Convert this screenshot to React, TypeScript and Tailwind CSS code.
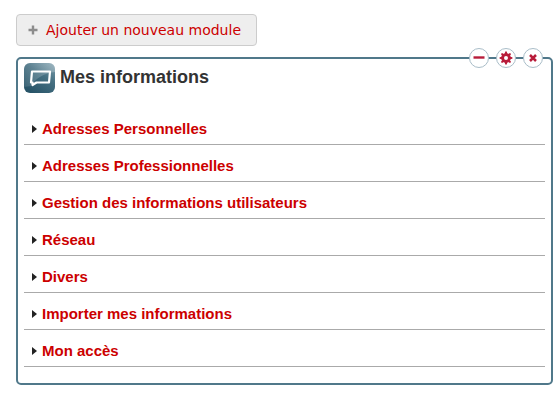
import React from 'react';

const sections = [
  'Adresses Personnelles',
  'Adresses Professionnelles',
  'Gestion des informations utilisateurs',
  'Réseau',
  'Divers',
  'Importer mes informations',
  'Mon accès',
];

const teeth = [0, 45, 90, 135, 180, 225, 270, 315];

const ModuleIcon = () => (
  <svg width="31" height="30" viewBox="0 0 31 30" aria-hidden="true">
    <defs>
      <linearGradient id="base" x1="1" y1="0" x2="0.3" y2="1">
        <stop offset="0" stopColor="#7fa0ae" />
        <stop offset="0.45" stopColor="#467082" />
        <stop offset="1" stopColor="#285468" />
      </linearGradient>
      <linearGradient id="shine" x1="0" y1="0" x2="1" y2="0">
        <stop offset="0" stopColor="#fff" stopOpacity="0.1" />
        <stop offset="1" stopColor="#fff" stopOpacity="0.25" />
      </linearGradient>
    </defs>
    <rect width="31" height="30" rx="6" fill="url(#base)" />
    <path d="M6 0h19a6 6 0 0 1 6 6v3C20 10 12 15 7 23L0 24V6a6 6 0 0 1 6-6z" fill="url(#shine)" />
    <path
      d="M8 8.5H26L25 19.500H12.500L8.500 22V19.500H7z"
      fill="none"
      stroke="#fff"
      strokeWidth="2.200"
      strokeLinejoin="round"
    />
  </svg>
);

const roundButton =
  'flex size-5 items-center justify-center rounded-full border border-[#a9bdc8] bg-white text-[#b81c3a]';

const Toolbar = () => (
  <div className="absolute -top-[11px] right-2 flex gap-[7px]">
    <button type="button" aria-label="Réduire" className={roundButton}>
      <svg width="12" height="12" viewBox="0 0 12 12" className="shrink-0">
        <path d="M0.500 5.500h11" stroke="currentColor" strokeWidth="2.400" />
      </svg>
    </button>
    <button type="button" aria-label="Configurer" className={roundButton}>
      <svg width="14" height="14" viewBox="0 0 14 14" className="shrink-0">
        <circle cx="7" cy="7" r="3.400" fill="none" stroke="currentColor" strokeWidth="2.800" />
        {teeth.map((angle) => (
          <path
            key={angle}
            d="M5.700 3L6.200 0.600h1.600L8.300 3z"
            fill="currentColor"
            transform={`rotate(${angle} 7 7)`}
          />
        ))}
      </svg>
    </button>
    <button type="button" aria-label="Fermer" className={roundButton}>
      <svg width="8" height="8" viewBox="0 0 8 8" className="shrink-0">
        <path d="M1 1l6 6M7 1L1 7" stroke="currentColor" strokeWidth="2.500" />
      </svg>
    </button>
  </div>
);

export default function App() {
  return (
    <main className="bg-white py-3.5 pl-4 pr-[7px] font-['Liberation_Sans',Arial,sans-serif]">
      <button
        type="button"
        className="flex h-8 items-center gap-2 rounded border border-[#cccccc] bg-[#eeeeee] pl-[11px] pr-[15px] font-['DejaVu_Sans',Verdana,sans-serif] text-sm text-[#cc0000]"
      >
        <svg width="10" height="10" viewBox="0 0 10 10" aria-hidden="true">
          <path d="M5 0.500v9M0.500 5h9" stroke="#8c8c8c" strokeWidth="2.400" />
        </svg>
        Ajouter un nouveau module
      </button>

      <section className="relative mt-[11px] rounded-[5px] border-2 border-[#50788a] px-1.5 pt-1 pb-4">
        <Toolbar />
        <header className="flex items-start gap-[5px]">
          <ModuleIcon />
          <h2 className="text-lg leading-7 font-bold text-[#333333]">Mes informations</h2>
        </header>
        <ul className="mt-[15px]">
          {sections.map((label) => (
            <li key={label} className="border-b border-[#aaaaaa]">
              <a href="#" className="flex h-9 items-center gap-[5px] pt-1.5 pl-2 text-[15px] leading-5 font-bold text-[#cc0000]">
                <svg width="5" height="8" viewBox="0 0 5 8" aria-hidden="true">
                  <path d="M0 0l5 4-5 4z" fill="#222" />
                </svg>
                {label}
              </a>
            </li>
          ))}
        </ul>
      </section>
    </main>
  );
}
